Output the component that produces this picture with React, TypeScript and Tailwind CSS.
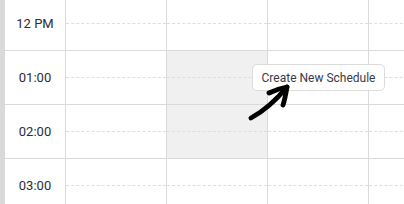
import React from "react";

const times = ["12 PM", "01:00", "02:00", "03:00"];

function Cell({ shaded, last }: { shaded?: boolean; last?: boolean }) {
  return (
    <div
      className={`flex flex-col shrink-0 border-r border-[#dadada] ${last ? "w-[40px]" : "w-[101px]"} ${shaded ? "bg-[#f0f0f0]" : ""}`}
    >
      <div className="h-[27px] border-b border-dashed border-[#dedede]" />
      <div className="h-[26px]" />
    </div>
  );
}

export default function App() {
  return (
    <div
      className="relative w-[404px] h-[204px] overflow-hidden bg-white"
      style={{ fontFamily: "Roboto, 'Liberation Sans', sans-serif" }}
    >
      <div className="flex mt-[-3px]">
        <div className="w-[5px] shrink-0 bg-[#d9d9d9]" />
        <div className="flex flex-col">
          {times.map((t, i) => (
            <div key={t} className="flex h-[54px] border-b border-[#dadada]">
              <div className="w-[61px] shrink-0 border-r border-[#dadada] flex items-center justify-center text-[13px] text-[#2d2d33] pt-[1px]">
                {t}
              </div>
              <Cell />
              <Cell shaded={i === 1 || i === 2} />
              <Cell />
              <Cell last />
            </div>
          ))}
        </div>
      </div>

      <div className="absolute left-[252px] top-[64px] w-[133px] h-[27px] rounded-[5px] border border-[#dcdcdc] bg-white flex items-center justify-center text-[12px] text-[#3a3a44]">
        Create New Schedule
      </div>

      <svg
        className="absolute left-0 top-0"
        width="404"
        height="204"
        viewBox="0 0 404 204"
      >
        <path
          d="M251 118 C264 111 277 99 287 87"
          stroke="#000"
          strokeWidth="4.8"
          fill="none"
          strokeLinecap="round"
        />
        <path
          d="M269 93 C275 90 281 88 287 87 C286 93 285 99 283 105"
          stroke="#000"
          strokeWidth="4.8"
          fill="none"
          strokeLinecap="round"
          strokeLinejoin="round"
        />
      </svg>
    </div>
  );
}
